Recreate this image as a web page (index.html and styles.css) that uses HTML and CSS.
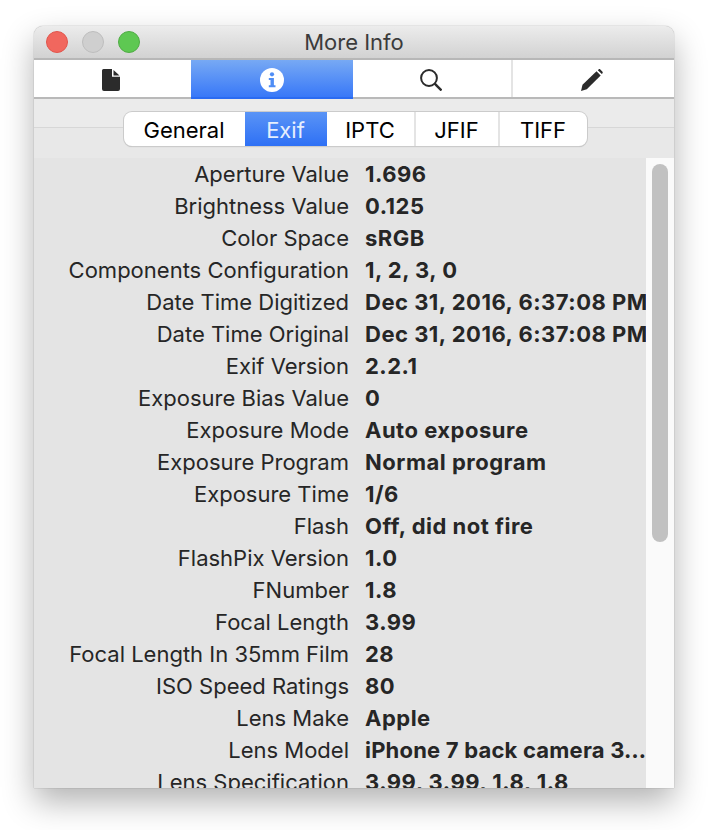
FILE: index.html
```html
<!DOCTYPE html>
<html lang="en">
<head>
<meta charset="utf-8">
<title>More Info</title>
<link rel="stylesheet" href="styles.css">
</head>
<body>
<main class="window">
  <header class="titlebar">
    <div class="lights">
      <span class="light light-close"></span>
      <span class="light light-min"></span>
      <span class="light light-zoom"></span>
    </div>
    <div class="title">More Info</div>
  </header>
  <nav class="toolbar">
    <div class="tool tool-doc">
      <svg class="icon" width="18" height="22" viewBox="0 0 18 22"><path d="M1.500 0H10V7.800H18V20A2 2 0 0 1 16 22H2A2 2 0 0 1 0 20V1.500A1.500 1.500 0 0 1 1.500 0Z" fill="#2b2b2b"/><path d="M11.500 1L17.500 6.500H11.500Z" fill="#2b2b2b"/></svg>
    </div>
    <div class="tool tool-active">
      <svg class="icon" width="24" height="24" viewBox="0 0 24 24"><circle cx="12" cy="12" r="12" fill="#fff"/><circle cx="12" cy="6.300" r="2.100" fill="#4f8df5"/><path d="M8.800 10H13.900V17.300H15.500V19.300H8.800V17.300H10.500V12H8.800Z" fill="#4f8df5"/></svg>
    </div>
    <div class="tool tool-sep">
      <svg class="icon" width="22" height="22" viewBox="0 0 22 22"><circle cx="9" cy="9" r="7.900" fill="none" stroke="#2b2b2b" stroke-width="2"/><path d="M14.700 14.700L21.500 21.500" stroke="#2b2b2b" stroke-width="2.400" fill="none"/></svg>
    </div>
    <div class="tool tool-pen">
      <svg class="icon" width="22" height="22" viewBox="0 0 22 22"><path d="M0 22L1.500 15.800L15.500 2.300L19.700 6.500L5.800 20.300Z" fill="#2b2b2b"/><path d="M16.800 1.200L17.600 0.400C18.100 0 18.700 0 19.100 0.300L21.500 2.700C21.900 3.100 21.900 3.700 21.500 4.200L20.800 5.100Z" fill="#2b2b2b"/></svg>
    </div>
  </nav>
  <section class="tabarea">
    <div class="tabs">
      <div class="tab tab-general">General</div>
      <div class="tab tab-exif tab-active">Exif</div>
      <div class="tab tab-iptc">IPTC</div>
      <div class="tab tab-jfif">JFIF</div>
      <div class="tab tab-tiff">TIFF</div>
    </div>
  </section>
  <section class="content">
    <div class="table">
      <div class="label">Aperture Value</div><div class="value">1.696</div>
      <div class="label">Brightness Value</div><div class="value">0.125</div>
      <div class="label">Color Space</div><div class="value">sRGB</div>
      <div class="label">Components Configuration</div><div class="value">1, 2, 3, 0</div>
      <div class="label">Date Time Digitized</div><div class="value">Dec 31, 2016, 6:37:08 PM</div>
      <div class="label">Date Time Original</div><div class="value">Dec 31, 2016, 6:37:08 PM</div>
      <div class="label">Exif Version</div><div class="value">2.2.1</div>
      <div class="label">Exposure Bias Value</div><div class="value">0</div>
      <div class="label">Exposure Mode</div><div class="value">Auto exposure</div>
      <div class="label">Exposure Program</div><div class="value">Normal program</div>
      <div class="label">Exposure Time</div><div class="value">1/6</div>
      <div class="label">Flash</div><div class="value">Off, did not fire</div>
      <div class="label">FlashPix Version</div><div class="value">1.0</div>
      <div class="label">FNumber</div><div class="value">1.8</div>
      <div class="label">Focal Length</div><div class="value">3.99</div>
      <div class="label">Focal Length In 35mm Film</div><div class="value">28</div>
      <div class="label">ISO Speed Ratings</div><div class="value">80</div>
      <div class="label">Lens Make</div><div class="value">Apple</div>
      <div class="label">Lens Model</div><div class="value value-tight">iPhone 7 back camera 3…</div>
      <div class="label">Lens Specification</div><div class="value">3.99, 3.99, 1.8, 1.8</div>
    </div>
    <div class="scrolltrack"><div class="scrollthumb"></div></div>
  </section>
</main>
</body>
</html>
```

FILE: styles.css
```css
* { box-sizing: border-box; }
html, body { margin: 0; background: #fff; }
body {
  width: 708px;
  height: 830px;
  padding: 26px 34px 0;
  overflow: hidden;
  font-family: Inter, "Liberation Sans", sans-serif;
}
.window {
  width: 640px;
  height: 762px;
  display: flex;
  flex-direction: column;
  overflow: hidden;
  border-radius: 9px 9px 0 0;
  background: #e8e8e8;
  box-shadow: 0 0 1px rgba(0,0,0,.55), 0 14px 32px rgba(0,0,0,.3);
}
.titlebar {
  height: 34px;
  flex: none;
  display: flex;
  align-items: center;
  background: linear-gradient(#ececec, #d2d2d2);
  border-bottom: 2px solid #b7b7b7;
  position: relative;
}
.lights { display: flex; gap: 14px; padding-left: 12px; }
.light { width: 22px; height: 22px; border-radius: 50%; border: 1px solid; }
.light-close { background: #f1675e; border-color: #e0564d; }
.light-min { background: #cfcfcf; border-color: #bdbdbd; }
.light-zoom { background: #5ec852; border-color: #50ac45; }
.title {
  position: absolute;
  left: 0; right: 0; top: 0;
  height: 32px;
  line-height: 33px;
  text-align: center;
  font-size: 22px;
  color: #3b3b3b;
}
.toolbar {
  height: 39px;
  flex: none;
  display: grid;
  grid-template-columns: 157px 162px 160px 161px;
  background: #fff;
  border-bottom: 2px solid #b9b9b9;
}
.tool {
  display: flex;
  align-items: center;
  justify-content: center;
  height: 37px;
  padding-top: 3px;
}
.tool-doc { padding-right: 3px; }
.tool-active {
  height: 39px;
  background: linear-gradient(#77a9f4, #3878f8);
  border-bottom: 2px solid #2a6bf2;
}
.tool-sep { border-right: 2px solid #e4e4e4; padding-right: 2px; }
.tool-pen { padding-right: 4px; }
.icon { display: block; }
.tabarea {
  height: 59px;
  flex: none;
  display: flex;
  justify-content: center;
  padding: 13px 0 0 2px;
  background: linear-gradient(#ebebeb 0, #ebebeb 28px, #d7d7d7 28px, #d7d7d7 29px, #e8e8e8 29px);
}
.tabs {
  height: 34px;
  width: 463px;
  display: flex;
  border-radius: 8px;
  overflow: hidden;
  background: #fff;
  box-shadow: 0 0 0 1px #cbcbcb, 0 1px 1px rgba(0,0,0,.22);
}
.tab {
  display: flex;
  align-items: center;
  justify-content: center;
  padding-top: 1px;
  font-size: 22px;
  color: #000;
  border-right: 2px solid #e4e4e4;
}
.tab-general { width: 121px; border-right: 0; }
.tab-exif { width: 82px; border-right: 0; }
.tab-iptc { width: 89px; }
.tab-jfif { width: 84px; }
.tab-tiff { width: 87px; border-right: 0; }
.tab-active { background: linear-gradient(#5a94f6, #2e70f5); color: #e6effd; }
.content { flex: 1; display: flex; min-height: 0; overflow: hidden; }
.table {
  width: 612px;
  flex: none;
  display: grid;
  grid-template-columns: 315px 282px;
  grid-auto-rows: 32px;
  column-gap: 15px;
  align-content: start;
  background: #e4e4e4;
  color: #262626;
  font-size: 22px;
  line-height: 32px;
  white-space: nowrap;
}
.label { text-align: right; }
.value { font-weight: 700; letter-spacing: .5px; padding-left: 1px; overflow: hidden; }
.value-tight { letter-spacing: .2px; }
.scrolltrack { flex: 1; background: #fafafa; padding: 6px 6px 0; }
.scrollthumb { width: 16px; height: 378px; border-radius: 8px; background: #c1c1c1; }
```
